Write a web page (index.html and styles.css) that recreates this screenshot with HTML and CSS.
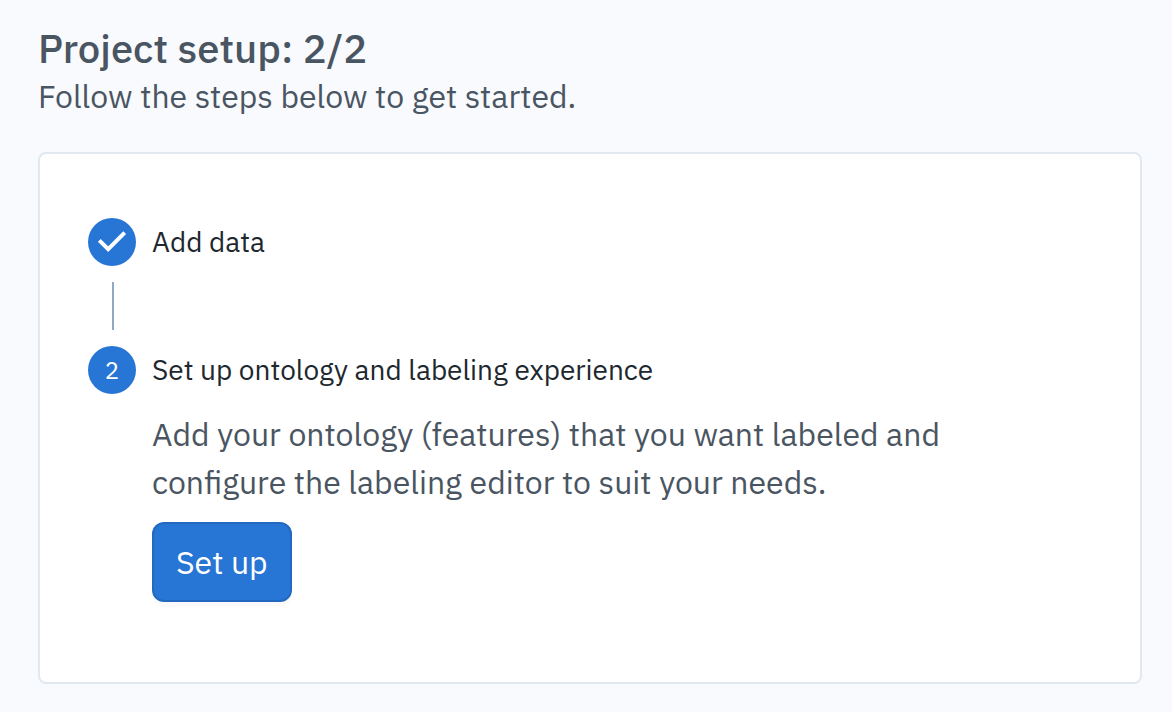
FILE: index.html
```html
<!DOCTYPE html>
<html lang="en">
<head>
  <meta charset="UTF-8" />
  <meta name="viewport" content="width=device-width, initial-scale=1" />
  <title>Project setup</title>
  <link rel="stylesheet" href="styles.css">
</head>
<body>

  <header class="page-header">
    <h1>Project setup: 2/2</h1>
    <p>Follow the steps below to get started.</p>
  </header>

  <main class="card">
    <ol class="steps">
      <li class="step">
        <span class="step-icon">
          <svg viewBox="0 0 48 48" role="img" aria-label="Completed">
            <path d="M11.3 22.3 L20.2 31.2 L36.7 14.7" fill="none" stroke="#fff" stroke-width="4" />
          </svg>
        </span>
        <h2>Add data</h2>
      </li>
      <li class="step">
        <span class="step-icon">2</span>
        <h2>Set up ontology and labeling experience</h2>
        <div class="step-content">
          <p>Add your ontology (features) that you want labeled and configure the labeling editor to suit your needs.</p>
          <button type="button" class="setup-btn">Set up</button>
        </div>
      </li>
    </ol>
  </main>

</body>
</html>
```
FILE: styles.css
```css
* {
  box-sizing: border-box;
}
body {
  margin: 0;
  padding: 24px 30px 28px 38px;
  font-family: 'IBM Plex Sans', 'Noto Sans', sans-serif;
  background-color: #f8fafe;
  color: #4a5562;
}
h1, h2, p {
  margin: 0;
}

/* PAGE HEADER */
.page-header {
  margin-bottom: 32px;
}
h1 {
  font-size: 40px;
  line-height: 48px;
  font-weight: 500;
}
.page-header p {
  font-size: 32px;
  line-height: 48px;
}

/* SETUP CARD */
.card {
  background: #fff;
  border: 2px solid #e1e8f0;
  border-radius: 8px;
  padding: 64px 48px 80px;
}
.steps {
  list-style: none;
  margin: 0;
  padding: 0;
}
.step {
  display: grid;
  grid-template-columns: 48px 1fr;
  column-gap: 16px;
  align-items: center;
}
.step-icon {
  width: 48px;
  height: 48px;
  border-radius: 50%;
  background: #2775d5;
  color: #fff;
  font-size: 24px;
  line-height: 48px;
  text-align: center;
}
.step-icon svg {
  display: block;
}
h2 {
  font-size: 28px;
  line-height: 48px;
  font-weight: 400;
  color: #21272e;
}

/* line between two steps */
.step:not(:last-child)::after {
  content: "";
  width: 2px;
  height: 48px;
  margin: 16px 0 16px 24px;
  background: #93a8c2;
}
.step-content {
  grid-column: 2;
  padding-top: 16px;
}
.step-content p {
  max-width: 840px;
  font-size: 32px;
  line-height: 48px;
}
.setup-btn {
  height: 80px;
  margin-top: 16px;
  padding: 0 22px;
  border: 2px solid #2369c0;
  border-radius: 12px;
  background: #2775d5;
  box-shadow: 0 4px 0 rgba(0, 0, 0, 0.02);
  color: #fff;
  font-family: inherit;
  font-size: 32px;
  cursor: pointer;
}
```
